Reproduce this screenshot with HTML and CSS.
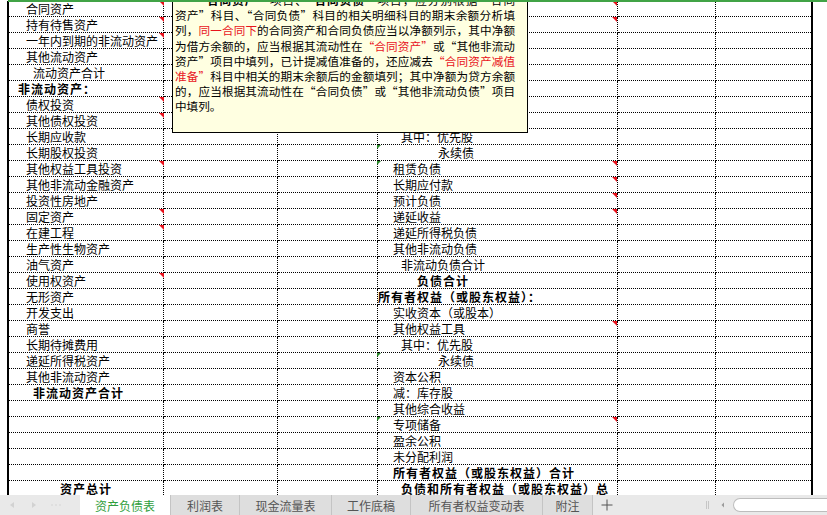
FILE: index.html
```html
<!DOCTYPE html>
<html lang="zh-CN">
<head>
<meta charset="utf-8">
<title>资产负债表</title>
<link rel="stylesheet" href="styles.css">
</head>
<body>
<div class="app">
  <div class="sheet-area">
    <div class="sel-line"></div>
    <div class="sheet">
      <div class="row"><div class="c ca ia1">合同资产<i class="tri-r"></i></div><div class="c"></div><div class="c"></div><div class="c cd id1"><i class="tri-r"></i></div><div class="c"></div><div class="c"></div></div>
      <div class="row"><div class="c ca ia1">持有待售资产<i class="tri-r"></i></div><div class="c"></div><div class="c"></div><div class="c cd id1"><i class="tri-r"></i></div><div class="c"></div><div class="c"></div></div>
      <div class="row"><div class="c ca ia1">一年内到期的非流动资产<i class="tri-r"></i></div><div class="c"></div><div class="c"></div><div class="c cd id1"></div><div class="c"></div><div class="c"></div></div>
      <div class="row"><div class="c ca ia1">其他流动资产</div><div class="c"></div><div class="c"></div><div class="c cd id1"></div><div class="c"></div><div class="c"></div></div>
      <div class="row"><div class="c ca ia2">流动资产合计</div><div class="c"></div><div class="c"></div><div class="c cd id2"></div><div class="c"></div><div class="c"></div></div>
      <div class="row"><div class="c ca ia0 b">非流动资产：</div><div class="c"></div><div class="c"></div><div class="c cd id0"></div><div class="c"></div><div class="c"></div></div>
      <div class="row"><div class="c ca ia1">债权投资<i class="tri-r"></i></div><div class="c"></div><div class="c"></div><div class="c cd id1"></div><div class="c"></div><div class="c"></div></div>
      <div class="row"><div class="c ca ia1">其他债权投资<i class="tri-r"></i></div><div class="c"></div><div class="c"></div><div class="c cd id1"></div><div class="c"></div><div class="c"></div></div>
      <div class="row"><div class="c ca ia1">长期应收款</div><div class="c"></div><div class="c"></div><div class="c cd id2">其中：优先股</div><div class="c"></div><div class="c"></div></div>
      <div class="row"><div class="c ca ia1">长期股权投资</div><div class="c"></div><div class="c"></div><div class="c cd id4"><i class="tri-g"></i>永续债</div><div class="c"></div><div class="c"></div></div>
      <div class="row"><div class="c ca ia1">其他权益工具投资<i class="tri-r"></i></div><div class="c"></div><div class="c"></div><div class="c cd id1"><i class="tri-g"></i>租赁负债<i class="tri-r"></i></div><div class="c"></div><div class="c"></div></div>
      <div class="row"><div class="c ca ia1">其他非流动金融资产</div><div class="c"></div><div class="c"></div><div class="c cd id1">长期应付款<i class="tri-r"></i></div><div class="c"></div><div class="c"></div></div>
      <div class="row"><div class="c ca ia1">投资性房地产</div><div class="c"></div><div class="c"></div><div class="c cd id1">预计负债<i class="tri-r"></i></div><div class="c"></div><div class="c"></div></div>
      <div class="row"><div class="c ca ia1">固定资产<i class="tri-r"></i></div><div class="c"></div><div class="c"></div><div class="c cd id1">递延收益<i class="tri-r"></i></div><div class="c"></div><div class="c"></div></div>
      <div class="row"><div class="c ca ia1">在建工程<i class="tri-r"></i></div><div class="c"></div><div class="c"></div><div class="c cd id1">递延所得税负债</div><div class="c"></div><div class="c"></div></div>
      <div class="row"><div class="c ca ia1">生产性生物资产</div><div class="c"></div><div class="c"></div><div class="c cd id1">其他非流动负债</div><div class="c"></div><div class="c"></div></div>
      <div class="row"><div class="c ca ia1">油气资产</div><div class="c"></div><div class="c"></div><div class="c cd id2">非流动负债合计</div><div class="c"></div><div class="c"></div></div>
      <div class="row"><div class="c ca ia1">使用权资产<i class="tri-r"></i></div><div class="c"></div><div class="c"></div><div class="c cd id3 b">负债合计</div><div class="c"></div><div class="c"></div></div>
      <div class="row"><div class="c ca ia1">无形资产</div><div class="c"></div><div class="c"></div><div class="c cd id0 b">所有者权益（或股东权益）：</div><div class="c"></div><div class="c"></div></div>
      <div class="row"><div class="c ca ia1">开发支出</div><div class="c"></div><div class="c"></div><div class="c cd id1">实收资本（或股本）</div><div class="c"></div><div class="c"></div></div>
      <div class="row"><div class="c ca ia1">商誉</div><div class="c"></div><div class="c"></div><div class="c cd id1">其他权益工具<i class="tri-r"></i></div><div class="c"></div><div class="c"></div></div>
      <div class="row"><div class="c ca ia1">长期待摊费用</div><div class="c"></div><div class="c"></div><div class="c cd id2">其中：优先股</div><div class="c"></div><div class="c"></div></div>
      <div class="row"><div class="c ca ia1">递延所得税资产</div><div class="c"></div><div class="c"></div><div class="c cd id4"><i class="tri-g"></i>永续债</div><div class="c"></div><div class="c"></div></div>
      <div class="row"><div class="c ca ia1">其他非流动资产</div><div class="c"></div><div class="c"></div><div class="c cd id1">资本公积</div><div class="c"></div><div class="c"></div></div>
      <div class="row"><div class="c ca ia2 b">非流动资产合计</div><div class="c"></div><div class="c"></div><div class="c cd id1">减：库存股</div><div class="c"></div><div class="c"></div></div>
      <div class="row"><div class="c ca"></div><div class="c"></div><div class="c"></div><div class="c cd id1">其他综合收益</div><div class="c"></div><div class="c"></div></div>
      <div class="row"><div class="c ca"></div><div class="c"></div><div class="c"></div><div class="c cd id1"><i class="tri-g"></i>专项储备<i class="tri-r"></i></div><div class="c"></div><div class="c"></div></div>
      <div class="row"><div class="c ca"></div><div class="c"></div><div class="c"></div><div class="c cd id1">盈余公积</div><div class="c"></div><div class="c"></div></div>
      <div class="row"><div class="c ca"></div><div class="c"></div><div class="c"></div><div class="c cd id1">未分配利润</div><div class="c"></div><div class="c"></div></div>
      <div class="row"><div class="c ca"></div><div class="c"></div><div class="c"></div><div class="c cd id1 b">所有者权益（或股东权益）合计</div><div class="c"></div><div class="c"></div></div>
      <div class="row"><div class="c ca ia3 b">资产总计</div><div class="c"></div><div class="c"></div><div class="c cd id2 b clip">负债和所有者权益（或股东权益）总</div><div class="c"></div><div class="c"></div></div>
    </div>

    <div class="note">
      <div class="ln">　　“<b>合同资产</b>”项目、“<b>合同负债</b>”项目，应分别根据“合同</div>
      <div class="ln">资产”科目、“合同负债”科目的相关明细科目的期末余额分析填</div>
      <div class="ln">列，<span class="red">同一合同下</span>的合同资产和合同负债应当以净额列示，其中净额</div>
      <div class="ln">为借方余额的，应当根据其流动性在<span class="red">“合同资产”</span>或“其他非流动</div>
      <div class="ln">资产”项目中填列，已计提减值准备的，还应减去<span class="red">“合同资产减值</span></div>
      <div class="ln"><span class="red">准备”</span>科目中相关的期末余额后的金额填列；其中净额为贷方余额</div>
      <div class="ln">的，应当根据其流动性在“合同负债”或“其他非流动负债”项目</div>
      <div class="ln last">中填列。</div>
    </div>
  </div>

  <div class="tabbar">
    <div class="nav">
      <svg width="80" height="20" viewBox="0 0 80 20"><path d="M14 7 L10 10 L14 13 Z" fill="#d2d2d2"/><path d="M32 7 L36 10 L32 13 Z" fill="#d2d2d2"/><circle cx="52" cy="10" r="0.8" fill="#d2d2d2"/><circle cx="56" cy="10" r="0.8" fill="#d2d2d2"/><circle cx="60" cy="10" r="0.8" fill="#d2d2d2"/></svg>
    </div>
    <div class="tab tab-bs active">资产负债表</div>
    <div class="tab tab-pl">利润表</div>
    <div class="tab tab-cf">现金流量表</div>
    <div class="tab tab-wp">工作底稿</div>
    <div class="tab tab-eq">所有者权益变动表</div>
    <div class="tab tab-nt">附注</div>
    <div class="add">
      <svg width="12" height="12" viewBox="0 0 12 12"><path d="M6 0.5 V11.5 M0.5 6 H11.5" stroke="#555" stroke-width="1" fill="none"/></svg>
    </div>
    <div class="spacer"></div>
    <div class="grip"></div>
    <div class="arrow">
      <svg width="6" height="8" viewBox="0 0 6 8"><path d="M4 1.5 L1.5 4 L4 6.5 Z" fill="#9a9a9a"/></svg>
    </div>
    <div class="track"></div>
  </div>
</div>
</body>
</html>
```

FILE: styles.css
```css
* {
  box-sizing: border-box;
  margin: 0;
  padding: 0;
}

html, body {
  width: 827px;
  height: 515px;
  overflow: hidden;
  background: #fff;
}

body {
  font-family: "Noto Sans CJK SC", "Noto Sans", sans-serif;
  font-size: 12px;
  color: #000;
}

.app {
  display: flex;
  flex-direction: column;
  height: 515px;
}

.sheet-area {
  position: relative;
  height: 495px;
  overflow: hidden;
  padding-top: 1px;
  padding-left: 7px;
}

.sel-line {
  position: absolute;
  top: 0;
  left: 8px;
  right: 0;
  height: 2px;
  background: #41a346;
  z-index: 3;
}

.sheet {
  width: 806px;
  border-left: 2px solid #000;
  border-right: 2px solid #000;
}

.row {
  display: grid;
  grid-template-columns: 155px 114px 100px 240px 98px 95px;
  height: 16px;
}

.c {
  position: relative;
  height: 16px;
  border-bottom: 1px dotted #000;
  border-right: 1px dotted #000;
  white-space: nowrap;
  line-height: 15px;
  font-size: 12px;
}

.c:last-child {
  border-right: none;
}

.b {
  font-weight: bold;
  letter-spacing: 1px;
}

.clip {
  overflow: hidden;
}

/* column A indents */
.ia0 { padding-left: 9px; }
.ia1 { padding-left: 17px; }
.ia2 { padding-left: 24px; }
.ia3 { padding-left: 51px; }

/* column D indents */
.id0 { padding-left: 0; }
.id1 { padding-left: 15px; }
.id2 { padding-left: 23px; }
.id3 { padding-left: 39px; }
.id4 { padding-left: 60px; }

.tri-r {
  position: absolute;
  top: 0;
  right: 0;
  width: 0;
  height: 0;
  border-top: 5px solid #e8101a;
  border-left: 5px solid transparent;
}

.ca .tri-r {
  right: -1px;
}

.tri-g {
  position: absolute;
  top: 0;
  left: -1px;
  width: 0;
  height: 0;
  border-top: 4px solid #2a8a2a;
  border-right: 4px solid transparent;
}

/* comment box */
.note {
  position: absolute;
  left: 172px;
  top: -8px;
  width: 356px;
  height: 141px;
  background: #ffffe1;
  border: 1px solid #000;
  padding: 0 12px 0 2px;
  font-size: 11.6px;
  line-height: 15.2px;
  z-index: 2;
}

.note b {
  font-weight: bold;
}

.note .ln {
  text-align: justify;
  text-align-last: justify;
  white-space: nowrap;
}

.note .ln.last {
  text-align: left;
  text-align-last: left;
}

.red {
  color: #e8141c;
}

/* tab bar */
.tabbar {
  display: flex;
  align-items: stretch;
  height: 20px;
  background: #e9e9e9;
  font-size: 12px;
  color: #555;
}

.nav {
  width: 80px;
  display: flex;
  align-items: center;
}

.nav svg {
  display: block;
}

.tab {
  display: flex;
  align-items: center;
  justify-content: center;
  background: #dedede;
  border-right: 1px solid #c4c4c4;
  line-height: 19px;
}

.tab.active {
  background: #fff;
  color: #2f9e3c;
}

.tab-bs { width: 91px; }
.tab-pl { width: 69px; }
.tab-cf { width: 92px; }
.tab-wp { width: 79px; }
.tab-eq { width: 132px; }
.tab-nt { width: 50px; }

.add {
  display: flex;
  align-items: center;
  padding-left: 8px;
}

.add svg {
  display: block;
}

.spacer {
  flex: 1;
}

.grip {
  width: 3px;
  margin: 6px 0;
  border-left: 1px solid #c6c6c6;
  border-right: 1px solid #c6c6c6;
}

.arrow {
  display: flex;
  align-items: center;
  margin-left: 11px;
}

.arrow svg {
  display: block;
}

.track {
  width: 94px;
  margin: 3px 0 3px 7px;
  background: #fff;
  border: 1px solid #bdbdbd;
  border-right: none;
  border-radius: 7px 0 0 7px;
}
```
